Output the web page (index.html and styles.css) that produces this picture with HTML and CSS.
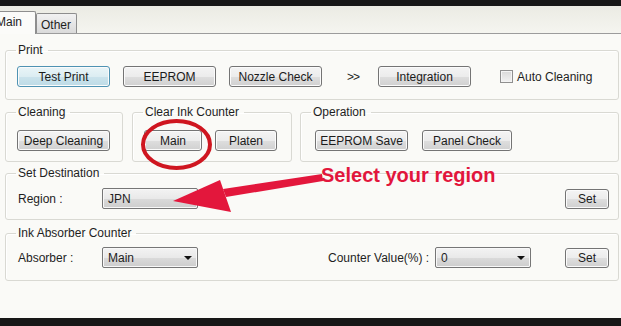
FILE: index.html
```html
<!DOCTYPE html>
<html lang="en">
<head>
  <meta charset="UTF-8" />
  <title>Adjustment Program</title>
  <link rel="stylesheet" href="styles.css">
</head>
<body>
  <div class="screen">
    <div class="topbar"></div>
    <div class="tabbar">
      <div class="tab active">Main</div>
      <div class="tab">Other</div>
    </div>

    <main class="panel">
      <fieldset class="group">
        <legend>Print</legend>
        <div class="row print-row">
          <button class="btn focus">Test Print</button>
          <button class="btn gap13">EEPROM</button>
          <button class="btn gap13">Nozzle Check</button>
          <span class="more">&gt;&gt;</span>
          <button class="btn">Integration</button>
          <span class="check"></span>
          <span class="check-label">Auto Cleaning</span>
        </div>
      </fieldset>

      <div class="group-line">
        <fieldset class="group cleaning">
          <legend>Cleaning</legend>
          <div class="row">
            <button class="btn">Deep Cleaning</button>
          </div>
        </fieldset>
        <fieldset class="group ink">
          <legend>Clear Ink Counter</legend>
          <div class="row">
            <button class="btn w58">Main</button>
            <button class="btn w62 gap13">Platen</button>
          </div>
        </fieldset>
        <fieldset class="group operation">
          <legend>Operation</legend>
          <div class="row op-row">
            <button class="btn">EEPROM Save</button>
            <button class="btn w90 gap14">Panel Check</button>
          </div>
        </fieldset>
      </div>

      <fieldset class="group dest">
        <legend>Set Destination</legend>
        <div class="row field-row">
          <span class="label">Region :</span>
          <div class="combo">JPN<span class="caret"></span></div>
          <button class="btn small">Set</button>
        </div>
      </fieldset>

      <fieldset class="group absorber">
        <legend>Ink Absorber Counter</legend>
        <div class="row field-row">
          <span class="label">Absorber :</span>
          <div class="combo">Main<span class="caret"></span></div>
          <span class="label counter">Counter Value(%) :</span>
          <div class="combo">0<span class="caret"></span></div>
          <button class="btn small">Set</button>
        </div>
      </fieldset>
    </main>

    <div class="bottombar"></div>

    <!-- red annotation drawn over the window -->
    <svg class="marks" width="621" height="326" viewBox="0 0 621 326">
      <ellipse cx="176.5" cy="144.5" rx="33.5" ry="23.5" fill="none" stroke="#cf1620" stroke-width="4"/>
      <polygon points="322,174 323,181 226,197 223,189" fill="#e3173c"/>
      <polygon points="173,201 220,180 231,212" fill="#e3173c"/>
    </svg>
    <div class="note">Select your region</div>
  </div>
</body>
</html>
```

FILE: styles.css
```css
body {
  margin: 0;
  background-color: #fafaf7;
  color: #1e1e1e;
  font-family: 'Liberation Sans', Arial, sans-serif;
  font-size: 12px;
}

.screen {
  position: relative;
  width: 621px;
  height: 326px;
  display: flex;
  flex-direction: column;
  overflow: hidden;
}

.topbar {
  height: 6px;
  background-color: #171717;
}

.bottombar {
  height: 8px;
  background-color: #171717;
}

.tabbar {
  height: 27px;
  display: flex;
  align-items: flex-end;
  background: linear-gradient(#ebebe3, #f5f5f0);
  border-bottom: 1px solid #9c9c9c;
}

.tab {
  box-sizing: border-box;
  height: 20px;
  width: 41px;
  padding: 4px 0 0 4px;
  border: 1px solid #8e8e8e;
  border-bottom: none;
  border-radius: 2px 2px 0 0;
  background: linear-gradient(#f2f2f2, #dadada);
  line-height: 14px;
}

.tab.active {
  height: 23px;
  width: 44px;
  margin-left: -8px;
  margin-bottom: -1px;
  padding: 3px 0 0 3px;
  background: #fbfbf9;
}

.panel {
  flex: 1;
  padding: 9px 2px 0 5px;
  display: flex;
  flex-direction: column;
}

.group {
  margin: 0;
  padding: 0;
  min-width: 0;
  border: 1px solid #d9d9d3;
  border-radius: 3px;
  box-shadow: inset 1px 1px 0 #ffffff;
}

.group legend {
  margin-left: 10px;
  padding: 0 5px 0 2px;
  line-height: 15px;
}

.row {
  display: flex;
  align-items: center;
  padding: 10px 0 10px 11px;
}

.print-row {
  padding: 8px 0 12px 11px;
}

.group-line {
  display: flex;
  margin-top: 5px;
}

.cleaning {
  width: 118px;
  box-sizing: border-box;
}

.ink {
  width: 160px;
  box-sizing: border-box;
  margin-left: 9px;
}

.operation {
  flex: 1;
  margin-left: 8px;
}

.op-row {
  padding-left: 14px;
}

.dest {
  margin-top: 4px;
}

.dest .field-row {
  padding: 7px 9px 10px 12px;
}

.absorber {
  margin-top: 6px;
}

.absorber .field-row {
  padding: 6px 9px 12px 12px;
}

.btn {
  box-sizing: border-box;
  width: 93px;
  height: 21px;
  padding: 0;
  font-family: inherit;
  font-size: 12px;
  color: #1b1b1b;
  border: 1px solid #747474;
  border-radius: 3px;
  background: linear-gradient(#f4f4f4 0%, #ececec 50%, #dedede 52%, #d0d0d0 100%);
  box-shadow: inset 0 0 0 1px #fbfbfb;
}

.btn.focus {
  border-color: #4f93b3;
  background: linear-gradient(#eaf5f8 0%, #dcedf2 50%, #cbe3ec 52%, #bddbe6 100%);
}

.w58 { width: 58px; }
.w62 { width: 62px; }
.w90 { width: 90px; }
.gap13 { margin-left: 13px; }
.gap14 { margin-left: 14px; }

.btn.small {
  width: 44px;
  height: 20px;
  margin-left: auto;
}

.more {
  width: 31px;
  margin-left: 25px;
  letter-spacing: -1px;
}

.check {
  box-sizing: border-box;
  width: 13px;
  height: 13px;
  margin-left: 29px;
  border: 1px solid #8f8f8f;
  background: linear-gradient(#d8d8d8, #f2f2f2);
  box-shadow: inset 0 0 0 1px #f4f4f4;
}

.check-label {
  margin-left: 4px;
}

.label {
  width: 84px;
}

.label.counter {
  width: 107px;
  margin-left: 130px;
}

.combo {
  box-sizing: border-box;
  width: 96px;
  height: 21px;
  padding: 0 5px 0 5px;
  display: flex;
  align-items: center;
  justify-content: space-between;
  border: 1px solid #767676;
  border-radius: 2px;
  background: linear-gradient(#f3f3f3 0%, #e9e9e9 50%, #dadada 52%, #cdcdcd 100%);
  box-shadow: inset 0 0 0 1px #f8f8f8;
}

.caret {
  width: 0;
  height: 0;
  border-left: 4px solid transparent;
  border-right: 4px solid transparent;
  border-top: 4px solid #111111;
}

.marks {
  position: absolute;
  top: 0;
  left: 0;
  pointer-events: none;
}

.note {
  position: absolute;
  left: 321px;
  top: 164px;
  font-size: 20px;
  line-height: 23px;
  font-weight: bold;
  color: #e2163c;
}
```
